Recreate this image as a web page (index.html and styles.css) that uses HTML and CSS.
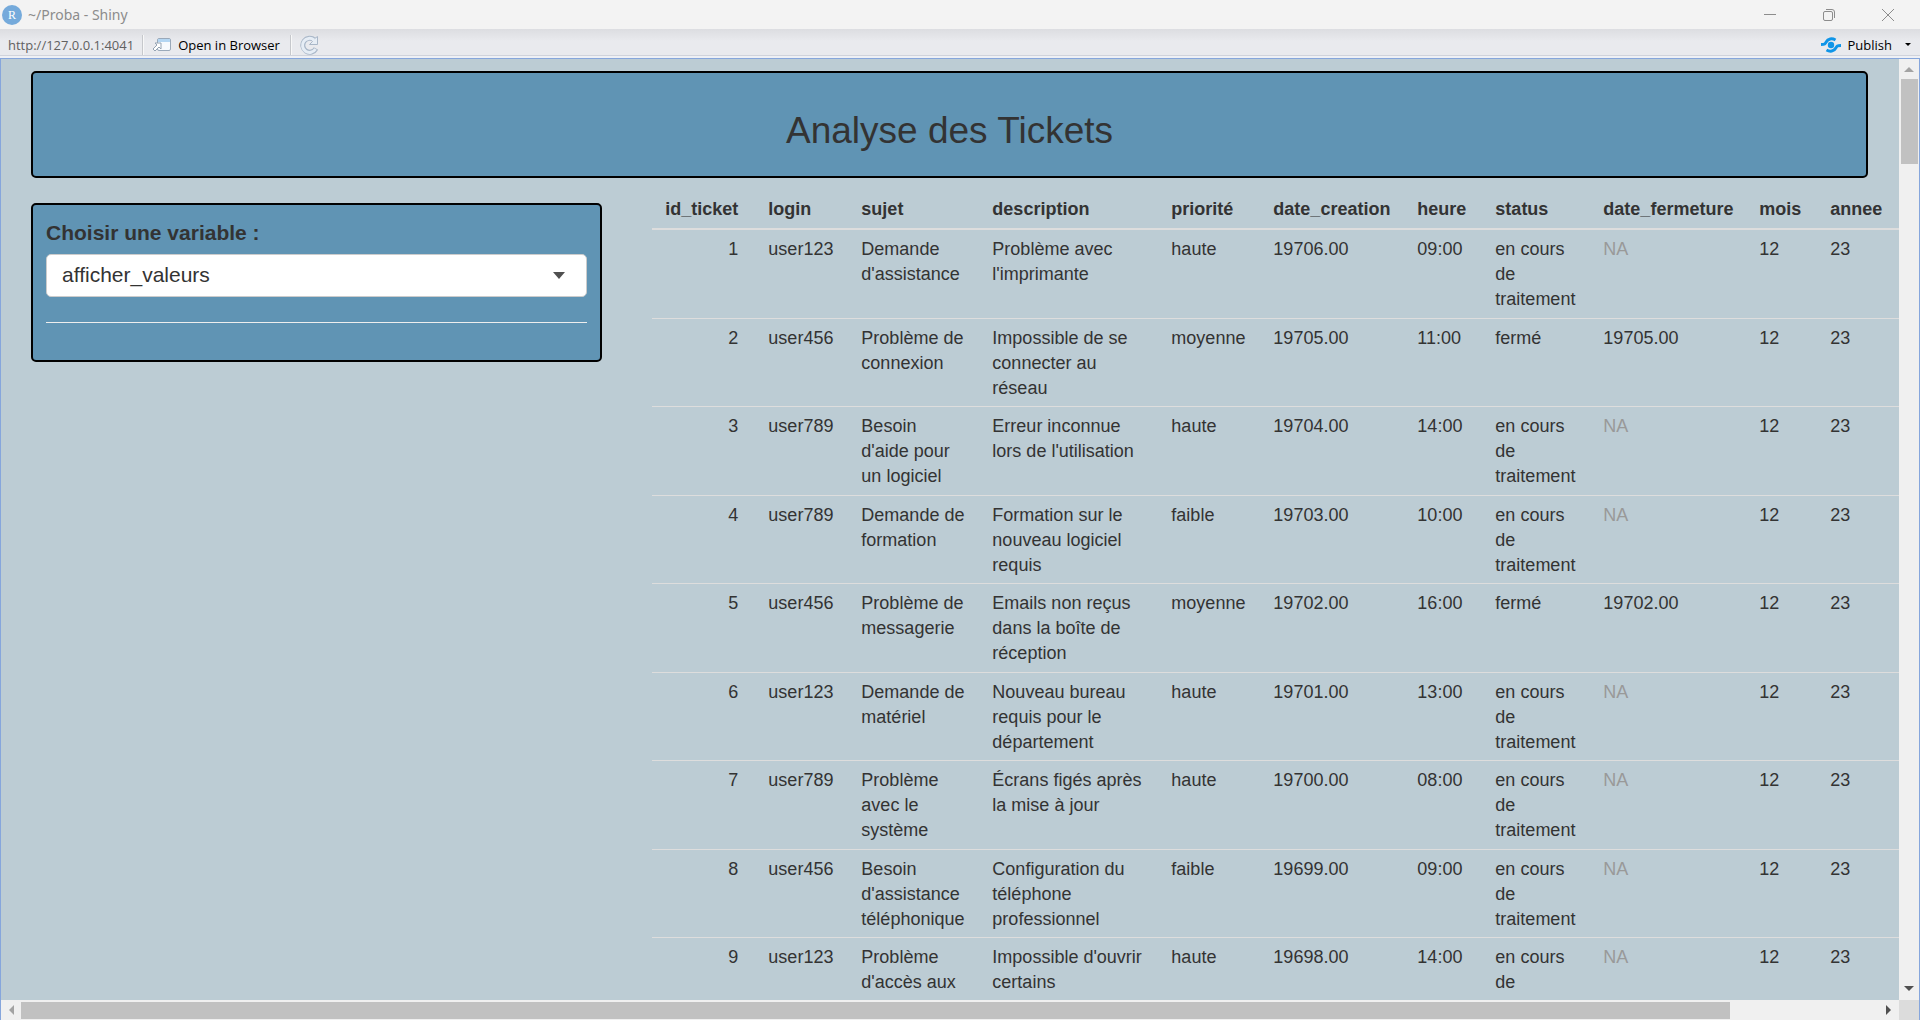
FILE: index.html
```html
<!DOCTYPE html>
<html lang="fr">
<head>
<meta charset="utf-8">
<title>~/Proba - Shiny</title>
<link rel="stylesheet" href="styles.css">
</head>
<body>
<div class="window">
  <header class="titlebar">
    <svg class="app-icon" viewBox="0 0 20 20" aria-hidden="true"><circle cx="10" cy="10" r="10" fill="#75aadb"/><text x="10" y="14" text-anchor="middle" class="app-letter">R</text></svg>
    <span class="window-title">~/Proba - Shiny</span>
    <div class="window-buttons">
      <button type="button" aria-label="Réduire"><svg width="14" height="14" viewBox="0 0 14 14"><path d="M1 6.500h12" /></svg></button>
      <button type="button" aria-label="Restaurer"><svg width="14" height="14" viewBox="0 0 14 14"><rect x="1.500" y="3.500" width="9" height="9" rx="1.500"/><path d="M4 1.500h6a2.500 2.500 0 0 1 2.500 2.500v6"/></svg></button>
      <button type="button" aria-label="Fermer"><svg width="14" height="14" viewBox="0 0 14 14"><path d="M1 1l12 12M13 1L1 13"/></svg></button>
    </div>
  </header>
  <nav class="toolbar">
    <span class="url">http://127.0.0.1:4041</span>
    <span class="divider"></span>
    <button type="button" class="tool open">
      <svg width="20" height="16" viewBox="0 0 20 16" aria-hidden="true"><rect x="5.500" y="1.500" width="13" height="12" rx="1.500" fill="#f7fafd" stroke="#9aa9ba"/><path d="M6 2h12v3H6z" fill="#b4d6f2"/><path d="M1 12l4-4-2-2h6v6l-2-2-4 4z" fill="#fff" stroke="#95a3b3"/></svg>
      Open in Browser
    </button>
    <span class="divider"></span>
    <button type="button" class="tool" aria-label="Actualiser">
      <svg width="20" height="20" viewBox="0 0 20 20" aria-hidden="true"><path d="M16 13.500a7 7 0 1 1-1.500-8.500" fill="none" stroke="#a9b7c8" stroke-width="5"/><path d="M17.500 1.500v8h-8l3-3-1.500-1.500 3-1z" fill="#e6edf5" stroke="#a9b7c8"/><path d="M15.500 14a7 7 0 1 1-1.500-9" fill="none" stroke="#e6edf5" stroke-width="3"/></svg>
    </button>
    <button type="button" class="tool publish">
      <svg width="22" height="16" viewBox="0 0 22 16" aria-hidden="true"><circle cx="11" cy="8" r="3.200" fill="#0f95e8"/><path d="M1 7.500c4 0 4.200-.6 5.200-2.500C8 1.500 12 1 15.500 3" /><path d="M21 8.500c-4 0-4.200.6-5.200 2.500C14 14.500 10 15 6.500 13"/></svg>
      Publish
      <span class="tri down small"></span>
    </button>
  </nav>
  <div class="frame">
    <main class="page">
      <h1 class="banner">Analyse des Tickets</h1>
      <div class="columns">
        <form class="sidebar">
          <label for="variable">Choisir une variable :</label>
          <div class="select-wrap">
            <select id="variable"><option>afficher_valeurs</option></select>
            <span class="tri down caret"></span>
          </div>
          <hr>
        </form>
        <div class="table-pane">
          <table class="tickets">
            <colgroup><col class="c-id"><col class="c-login"><col class="c-sujet"><col class="c-desc"><col class="c-prio"><col class="c-crea"><col class="c-heure"><col class="c-status"><col class="c-ferm"><col class="c-mois"><col class="c-annee"></colgroup>
            <thead><tr><th>id_ticket</th><th>login</th><th>sujet</th><th>description</th><th>priorité</th><th>date_creation</th><th>heure</th><th>status</th><th>date_fermeture</th><th>mois</th><th>annee</th></tr></thead>
            <tbody>
              <tr><td>1</td><td>user123</td><td>Demande d'assistance</td><td>Problème avec l'imprimante</td><td>haute</td><td>19706.00</td><td>09:00</td><td>en cours de traitement</td><td class="na">NA</td><td>12</td><td>23</td></tr>
              <tr><td>2</td><td>user456</td><td>Problème de connexion</td><td>Impossible de se connecter au réseau</td><td>moyenne</td><td>19705.00</td><td>11:00</td><td>fermé</td><td>19705.00</td><td>12</td><td>23</td></tr>
              <tr><td>3</td><td>user789</td><td>Besoin d'aide pour un logiciel</td><td>Erreur inconnue lors de l'utilisation</td><td>haute</td><td>19704.00</td><td>14:00</td><td>en cours de traitement</td><td class="na">NA</td><td>12</td><td>23</td></tr>
              <tr><td>4</td><td>user789</td><td>Demande de formation</td><td>Formation sur le nouveau logiciel requis</td><td>faible</td><td>19703.00</td><td>10:00</td><td>en cours de traitement</td><td class="na">NA</td><td>12</td><td>23</td></tr>
              <tr><td>5</td><td>user456</td><td>Problème de messagerie</td><td>Emails non reçus dans la boîte de réception</td><td>moyenne</td><td>19702.00</td><td>16:00</td><td>fermé</td><td>19702.00</td><td>12</td><td>23</td></tr>
              <tr><td>6</td><td>user123</td><td>Demande de matériel</td><td>Nouveau bureau requis pour le département</td><td>haute</td><td>19701.00</td><td>13:00</td><td>en cours de traitement</td><td class="na">NA</td><td>12</td><td>23</td></tr>
              <tr><td>7</td><td>user789</td><td>Problème avec le système</td><td>Écrans figés après la mise à jour</td><td>haute</td><td>19700.00</td><td>08:00</td><td>en cours de traitement</td><td class="na">NA</td><td>12</td><td>23</td></tr>
              <tr><td>8</td><td>user456</td><td>Besoin d'assistance téléphonique</td><td>Configuration du téléphone professionnel</td><td>faible</td><td>19699.00</td><td>09:00</td><td>en cours de traitement</td><td class="na">NA</td><td>12</td><td>23</td></tr>
              <tr><td>9</td><td>user123</td><td>Problème d'accès aux</td><td>Impossible d'ouvrir certains</td><td>haute</td><td>19698.00</td><td>14:00</td><td>en cours de</td><td class="na">NA</td><td>12</td><td>23</td></tr>
            </tbody>
          </table>
        </div>
      </div>
    </main>
    <div class="vscroll"><span class="tri up muted"></span><div class="track"><div class="thumb"></div></div><span class="tri down"></span></div>
    <div class="hscroll"><span class="tri left muted"></span><div class="track"><div class="thumb"></div></div><span class="tri right"></span></div>
    <div class="corner"></div>
  </div>
</div>
</body>
</html>
```
FILE: styles.css
```css
* { box-sizing: border-box; }
body { margin: 0; color: #333; font: 18px/25px "Liberation Sans", Arial, sans-serif; }
button { border: 0; padding: 0; background: none; color: inherit; font: inherit; }
svg { display: block; }

.window { height: 100vh; display: flex; flex-direction: column; overflow: hidden; }

.titlebar { height: 29px; flex: none; display: flex; align-items: center; gap: 6px; padding: 0 25px 0 2px; background: #f3f3f3; color: #8c8c8c; font: 14px/20px "Noto Sans", sans-serif; }
.app-icon { width: 20px; height: 20px; }
.app-letter { font: 12px "Liberation Serif", serif; fill: #fff; }
.window-buttons { margin-left: auto; display: flex; gap: 45px; }
.window-buttons svg { fill: none; stroke: #8c8c8c; }

.toolbar { height: 29px; flex: none; display: flex; align-items: center; padding: 4px 9px 0 8px; border-bottom: 2px solid #eef0f5; background: linear-gradient(#dcdde1, #e9eaee 12px, #e9eaee 26px, #d0d3dc 26px); color: #000; font: 13px/20px "Open Sans", sans-serif; }
.url { color: #616161; }
.divider { width: 2px; height: 20px; margin: 0 8px; background: #c6c8cc; border-right: 1px solid #f8f8f8; }
.tool { display: flex; align-items: center; gap: 6px; }
.open { margin-right: 2px; }
.publish { margin-left: auto; }
.publish path { fill: none; stroke: #0f95e8; stroke-width: 3; }

.frame { flex: 1; min-height: 0; display: grid; grid-template: minmax(0, 1fr) 20px / minmax(0, 1fr) 20px; border: solid #86a6dc; border-width: 1px 1px 0; }
.page { overflow: hidden; padding: 12px 0 0 30px; background: #bcccd4; }
.banner { margin: 0 31px 0 0; padding: 38px 0 25px; border: 2px solid #000; border-radius: 5px; background: #6094b4; text-align: center; font-size: 37px; line-height: 40px; font-weight: 400; }
.columns { display: grid; grid-template-columns: 11fr minmax(0, 24fr); gap: 50px; align-items: start; }
.sidebar { margin-top: 25px; padding: 15px 13px 37px; border: 2px solid #000; border-radius: 5px; background: #6094b4; font-size: 21px; }
.sidebar label { display: block; margin-bottom: 9px; font-weight: 700; }
.select-wrap { position: relative; }
.sidebar select { display: block; width: 100%; height: 43px; padding: 0 15px 2px; border: 1px solid #ccc; border-radius: 5px; background: #fff; color: #333; font: inherit; appearance: none; }
.sidebar .caret { position: absolute; right: 22px; top: 18px; border-width: 7px 6px 0; border-top-color: #333; }
.sidebar hr { margin: 25px 0 0; border: 0; border-top: 1px solid #eee; }

.table-pane { overflow: hidden; }
.tickets { width: 1263px; table-layout: fixed; border-collapse: collapse; }
.tickets th, .tickets td { padding: 6px 8px 6px 15px; text-align: left; vertical-align: top; }
.tickets td:nth-child(3) { padding-right: 12px; }
.tickets th:first-child, .tickets td:first-child { padding-right: 15px; text-align: right; }
.tickets th { padding-top: 19px; border-bottom: 2px solid #ddd; }
.tickets th:first-child { padding-left: 0; }
.tickets td { border-bottom: 1px solid #ddd; padding-top: 7px; }
.tickets tr:nth-child(even) td { padding-bottom: 5px; }
.tickets .na { color: #999; }
.c-id { width: 101px; }
.c-login { width: 93px; }
.c-sujet { width: 131px; }
.c-desc { width: 179px; }
.c-prio { width: 102px; }
.c-crea { width: 144px; }
.c-heure { width: 78px; }
.c-status { width: 108px; }
.c-ferm { width: 156px; }
.c-mois { width: 71px; }
.c-annee { width: 100px; }

.vscroll, .hscroll { display: flex; align-items: center; background: #f0f0f0; }
.vscroll { flex-direction: column; padding: 8px 0 9px; gap: 7px; }
.hscroll { padding: 0 8px; gap: 7px; }
.track { flex: 1; }
.vscroll .thumb { width: 17px; height: 85px; background: #c1c1c1; }
.hscroll .thumb { width: 92%; height: 17px; background: #c1c1c1; }
.vscroll .track { padding-left: 1px; }
.corner { background: #dcdcdc; }

.tri { width: 0; height: 0; border: 5px solid transparent; }
.tri.down { border-top-color: #505050; border-bottom: 0; }
.tri.up { border-bottom-color: #505050; border-top: 0; }
.tri.left { border-right-color: #505050; border-left: 0; }
.tri.right { border-left-color: #505050; border-right: 0; }
.tri.up.muted { border-bottom-color: #a3a3a3; }
.tri.left.muted { border-right-color: #a3a3a3; }
.tri.small { margin-left: 7px; border-width: 3px; border-bottom: 0; border-top-color: #000; }
```
